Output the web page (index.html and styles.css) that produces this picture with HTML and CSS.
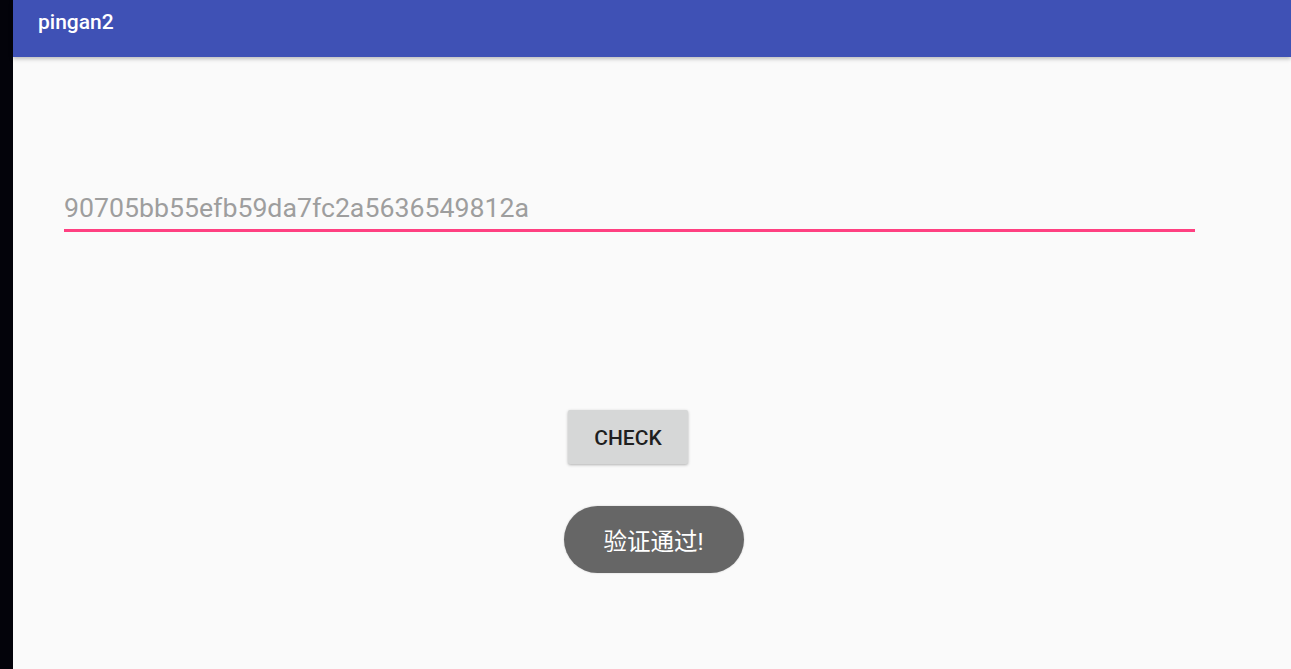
FILE: index.html
```html
<!DOCTYPE html>
<html lang="zh">
<head>
<meta charset="UTF-8">
<meta name="viewport" content="width=device-width, initial-scale=1.0">
<title>pingan2</title>
<link rel="stylesheet" href="styles.css">
</head>
<body>

<div class="edge"></div>
<div class="screen">
  <div class="app-bar">
    <span class="title">pingan2</span>
  </div>
  <div class="content">
    <div class="field">
      <span class="field-text">90705bb55efb59da7fc2a5636549812a</span>
    </div>
    <div class="actions">
      <button class="check">CHECK</button>
    </div>
    <div class="toast-row">
      <div class="toast">验证通过!</div>
    </div>
  </div>
</div>

</body>
</html>
```

FILE: styles.css
```css
html, body {
  margin: 0;
  height: 100%;
}

body {
  display: flex;
  background: #000;
  font-family: Roboto, "Noto Sans CJK SC", sans-serif;
  overflow: hidden;
}

.edge {
  width: 13px;
  background: #03030a;
  flex-shrink: 0;
}

.screen {
  flex: 1;
  background: #fafafa;
  display: flex;
  flex-direction: column;
}

.app-bar {
  height: 57px;
  background: #3f51b5;
  box-shadow: 0 2px 4px rgba(0, 0, 0, 0.25);
  padding-left: 25px;
  position: relative;
  z-index: 1;
}

.title {
  display: block;
  color: #fff;
  font-size: 21px;
  font-weight: 500;
  line-height: 24px;
  padding-top: 10px;
}

.content {
  padding: 0 96px 0 51px;
}

.field {
  margin-top: 134px;
  border-bottom: 3px solid #ff4081;
  height: 41px;
  box-sizing: border-box;
}

.field-text {
  display: block;
  font-size: 26.7px;
  line-height: 32px;
  padding-top: 1px;
  color: #9e9e9e;
}

.actions {
  display: flex;
  justify-content: center;
  margin-top: 178px;
  padding-right: 3px;
}

.check {
  width: 120px;
  height: 54px;
  border: none;
  border-radius: 2px;
  background: #d6d7d7;
  box-shadow: 0 1px 3px rgba(0, 0, 0, 0.3);
  font-family: Roboto, sans-serif;
  font-size: 21px;
  font-weight: 500;
  color: #1f1f1f;
  padding: 2px 0 0;
}

.toast-row {
  display: flex;
  justify-content: center;
  margin-top: 42px;
  padding-left: 48px;
}

.toast {
  width: 180px;
  height: 67px;
  border-radius: 34px;
  background: #666;
  color: #fff;
  font-size: 23.5px;
  display: flex;
  align-items: center;
  justify-content: center;
  box-shadow: 0 0 2px rgba(0, 0, 0, 0.2);
}
```
